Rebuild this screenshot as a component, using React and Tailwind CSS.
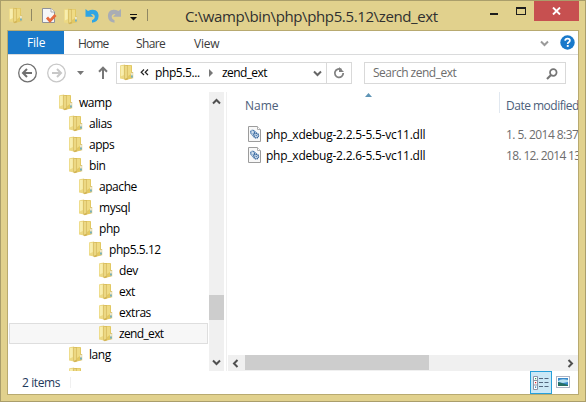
import React from "react";

const FONT = 'font-["Open_Sans","Noto_Sans",sans-serif]';

function Folder({ className = "" }) {
  return (
    <svg width="14" height="17" viewBox="0 0 14 17" className={"shrink-0 " + className}>
      <path d="M0 1.4 Q2 .6 5 .8 V15.6 L0 14.6Z" fill="#ecd984" />
      <path d="M.8 2 H3.8 V11 L.8 12.5Z" fill="#f8eeae" />
      <path d="M6 1 H11.2 Q12 1 12 2 V14.6 L6 16Z" fill="#e2c862" />
      <path d="M4.4 .8 L8 1.4 V15.2 L5.8 16.2 L4.4 15.4Z" fill="#d3b557" />
      <path d="M5 1.4 L7.4 1.9 V13.8 L5 14.8Z" fill="#ecd884" />
      <path d="M8 1.8 H11 V10 L8 12Z" fill="#efdb84" />
      <path d="M11 8 H13.2 V14.4 H11Z" fill="#dbc678" />
      <path d="M11.3 9 H12.6 V11.5 H11.3Z" fill="#f4f4ee" />
      <path d="M11.3 11.5 H12.6 V13.5 H11.3Z" fill="#46a8e0" />
    </svg>
  );
}

function DllIcon() {
  return (
    <svg width="14" height="16" viewBox="0 0 14 16" className="shrink-0">
      <path d="M0.5 0.5 H9.5 L12.5 3.5 V15.5 H0.5Z" fill="#f8f8f8" stroke="#9c9c9c" />
      <path d="M9.5 0.5 V3.5 H12.5" fill="#fff" stroke="#b0b0b0" />
      <circle cx="4.6" cy="6.2" r="2" fill="#cfdeed" stroke="#3c6ea5" strokeWidth="1.3" strokeDasharray="1 .5" />
      <circle cx="8.2" cy="9.6" r="2.3" fill="#cfdeed" stroke="#2e5f98" strokeWidth="1.4" strokeDasharray="1.1 .5" />
      <circle cx="8.2" cy="9.6" r=".7" fill="#2e5f98" />
      <path d="M3.6 8.6 L6.4 11.6 M6.4 4.9 L9.2 7.2" stroke="#6f94be" />
    </svg>
  );
}

function Chevron({ className, color = "#505050", d }) {
  return (
    <svg width="9" height="9" viewBox="0 0 9 9" className={"shrink-0 " + className}>
      <path d={d} fill="none" stroke={color} strokeWidth="2" />
    </svg>
  );
}
const UP = "M1 6.5 L4.5 3 L8 6.5";
const DOWN = "M1 2.5 L4.5 6 L8 2.5";
const LEFT = "M6.5 1 L3 4.5 L6.5 8";
const RIGHT = "M2.5 1 L6 4.5 L2.5 8";

const TREE = [
  ["wamp", "pl-[51px]"],
  ["alias", "pl-[61px]"],
  ["apps", "pl-[61px]"],
  ["bin", "pl-[61px]"],
  ["apache", "pl-[71px]"],
  ["mysql", "pl-[71px]"],
  ["php", "pl-[71px]"],
  ["php5.5.12", "pl-[81px]"],
  ["dev", "pl-[91px]"],
  ["ext", "pl-[91px]"],
  ["extras", "pl-[91px]"],
  ["zend_ext", "pl-[91px]"],
  ["lang", "pl-[61px]"],
  ["", "pl-[61px]"],
];

function TitleBar() {
  return (
    <div className="flex h-[29px] shrink-0">
      <div className="flex w-[184px] shrink-0">
        <Folder className="ml-2 mt-[6px]" />
        <div className="ml-2 mt-2 h-3 w-px bg-[#8f8763]" />
        <svg width="17" height="17" viewBox="0 0 17 17" className="ml-[9px] mt-[6px]">
          <path d="M1.5 1.5 H10 L13.5 5 V15.5 H1.5Z" fill="#f5f6f8" stroke="#8f9199" />
          <path d="M10 1.5 V5 H13.5" fill="#fff" stroke="#a5a7ad" />
          <path d="M6 10.5 L9 14 L14.5 8" fill="none" stroke="#e66a3c" strokeWidth="2.8" />
        </svg>
        <Folder className="ml-[6px] mt-[7px]" />
        <svg width="15" height="16" viewBox="0 0 15 16" className="ml-[7px] mt-[7px]">
          <path d="M0.5 1 L3 3 Q7 .8 10.5 2.2 Q13.6 4 13.6 8 Q13.4 14 7 14.8 V12.2 Q9.8 11.5 9.8 8.6 Q9.6 5.6 6 6 L8.4 8.8 H0.5Z" fill="#2fa5e4" />
        </svg>
        <svg width="15" height="16" viewBox="0 0 15 16" className="ml-[7px] mt-[7px]">
          <path d="M14 1 L11.5 3 Q7.5 .8 4 2.2 Q.9 4 .9 8 Q1.1 14 7.5 14.8 V12.2 Q4.7 11.5 4.7 8.6 Q4.9 5.6 8.5 6 L6.1 8.8 H14Z" fill="#a9adb5" />
        </svg>
        <svg width="9" height="8" viewBox="0 0 9 8" className="ml-[7px] mt-[12px]">
          <path d="M1 1 H8 V2 H1Z M1 4 H8 L4.5 7.5Z" fill="#111" />
        </svg>
        <div className="ml-[9px] mt-2 h-3 w-px bg-[#8f8763]" />
      </div>
      <div className="mt-[4px] w-[270px] whitespace-nowrap text-[15px] leading-[22px] tracking-[-0.37px] text-[#303030]">
        C:\wamp\bin\php\php5.5.12\zend_ext
      </div>
      <div className="ml-auto flex w-[101px]">
        <div className="ml-[6px] mt-3 h-[2px] w-2 bg-[#1d1d1d]" />
        <div className="ml-[18px] mt-[6px] h-2 w-[10px] border border-t-2 border-[#1d1d1d]" />
        <div className="ml-auto mr-[6px] flex h-5 w-[45px] items-center justify-center bg-[#c75050]">
          <svg width="9" height="8" viewBox="0 0 9 8">
            <path d="M1 .5 L8 7.5 M8 .5 L1 7.5" stroke="#fff" strokeWidth="1.9" />
          </svg>
        </div>
      </div>
    </div>
  );
}

function Ribbon() {
  return (
    <div className="flex h-6 shrink-0 border-b border-[#dadbdc] leading-[26px] text-[#3b3b3b]">
      <div className="h-[23px] w-14 bg-[#1979ca] pl-[19px] leading-6 tracking-[-0.2px] text-white">File</div>
      <div className="w-[58px] pl-[14px] tracking-[-0.9px]">Home</div>
      <div className="w-[72px] pl-[14px] tracking-[-0.6px]">Share</div>
      <div className="tracking-[-0.2px]">View</div>
      <Chevron className="ml-auto mt-2" color="#9a9a9a" d={DOWN} />
      <svg width="15" height="15" viewBox="0 0 15 15" className="ml-[11px] mr-[3px] mt-1">
        <circle cx="7.5" cy="7.5" r="7.2" fill="#1979ca" />
        <path d="M5.2 5.7 Q5.2 3.7 7.6 3.7 Q9.9 3.7 9.9 5.6 Q9.9 6.7 8.7 7.3 Q7.7 7.8 7.7 9" fill="none" stroke="#fff" strokeWidth="1.7" />
        <rect x="6.8" y="10" width="1.9" height="1.9" fill="#fff" />
      </svg>
    </div>
  );
}

function NavBar() {
  return (
    <div className="flex h-[37px] shrink-0 pt-[7px]">
      <svg width="100" height="22" viewBox="0 0 100 22" className="mr-2 shrink-0">
        <g fill="none">
          <circle cx="19.5" cy="11" r="8.8" stroke="#707070" strokeWidth="1.3" />
          <path d="M24 11 H15.5 M19 7 L15 11 L19 15" stroke="#707070" strokeWidth="2" />
          <circle cx="48.5" cy="11" r="8.8" stroke="#c8c8c8" strokeWidth="1.3" />
          <path d="M44 11 H52.5 M49 7 L53 11 L49 15" stroke="#c8c8c8" strokeWidth="2" />
          <path d="M95 17 V6 M91 9.7 L95 5.7 L99 9.7" stroke="#777" strokeWidth="2" />
        </g>
        <path d="M69 9 H76 L72.5 13Z" fill="#777" />
      </svg>
      <div className="flex h-[22px] w-[236px] shrink-0 border border-[#d9d9d9] leading-5">
        <Folder className="ml-[3px] mt-[1px]" />
        <svg width="9" height="7" viewBox="0 0 9 7" className="ml-[6px] mt-[6px]">
          <path d="M4 .5 L1.2 3.2 L4 6 M8 .5 L5.2 3.2 L8 6" fill="none" stroke="#222" strokeWidth="1.2" />
        </svg>
        <div className="ml-[6px] w-[48px] whitespace-nowrap tracking-[-0.4px]">php5.5...</div>
        <svg width="6" height="8" viewBox="0 0 6 8" className="ml-[5px] mt-[6px]">
          <path d="M1 0 L5 4 L1 8Z" fill="#777" />
        </svg>
        <div className="ml-[8px] w-[91px] tracking-[-0.6px]">zend_ext</div>
        <Chevron className="mt-[6px]" color="#666" d={DOWN} />
        <div className="ml-auto flex w-[25px] justify-center border-l border-[#d9d9d9] pt-[4px]">
          <svg width="12" height="12" viewBox="0 0 12 12">
            <path d="M8.5 2.8 A4.2 4.2 0 1 0 10.2 6" fill="none" stroke="#808080" strokeWidth="1.8" />
            <path d="M6 0 V5 H11Z" fill="#808080" />
          </svg>
        </div>
      </div>
      <div className="ml-3 flex h-[22px] w-[202px] shrink-0 border border-[#d9d9d9] pl-2 leading-5 tracking-[-0.5px] text-[#6d6d6d]">
        Search zend_ext
        <svg width="12" height="12" viewBox="0 0 12 12" className="ml-auto mr-[7px] mt-[5px]">
          <circle cx="7.3" cy="4.5" r="3.3" fill="none" stroke="#757575" strokeWidth="1.7" />
          <path d="M5 7 L1 11" stroke="#757575" strokeWidth="2.2" />
        </svg>
      </div>
    </div>
  );
}

function Tree() {
  return (
    <div className="flex w-[219px] shrink-0 border-r border-[#f0f0f0]">
      <div className="h-[279px] w-[201px] overflow-hidden">
        {TREE.map(([name, pad], i) => (
          <div
            key={i}
            className={
              "flex h-[21px] " +
              (name === "zend_ext"
                ? "mx-px border border-[#dedede] bg-[#f7f7f7] pl-[89px] leading-[20px] tracking-[-0.65px]"
                : "leading-[22px] tracking-[-0.45px] " + pad)
            }
          >
            <Folder className={name === "zend_ext" ? "mt-[1px]" : "mt-[2px]"} />
            <span className="ml-[6px]">{name}</span>
          </div>
        ))}
      </div>
      <div className="flex w-[15px] flex-col bg-[#f0f0f0]">
        <Chevron className="ml-[3px] mt-[5px]" d={UP} />
        <div className="mt-[189px] h-[25px] shrink-0 bg-[#cdcdcd]" />
        <Chevron className="mb-[4px] ml-[3px] mt-auto" d={DOWN} />
      </div>
    </div>
  );
}

function Files() {
  const files = [
    ["php_xdebug-2.2.5-5.5-vc11.dll", "1. 5. 2014 8:37", "tracking-[-0.55px]"],
    ["php_xdebug-2.2.6-5.5-vc11.dll", "18. 12. 2014 13", "tracking-[-0.65px]"],
  ];
  return (
    <div className="ml-px flex w-[350px] flex-col overflow-hidden">
      <div className="flex h-[21px] shrink-0 whitespace-nowrap leading-[27px] text-[#4c607a]">
        <div className="w-[137px] shrink-0 pl-[17px]">Name</div>
        <svg width="7" height="4" viewBox="0 0 7 4" className="mt-[1px]">
          <path d="M0 4 L3.5 0 L7 4Z" fill="#5e94b5" />
        </svg>
        <div className="ml-auto w-[79px] shrink-0 border-l border-[#e1e8f0] pl-[6px] tracking-[-0.5px]">Date modified</div>
      </div>
      <div className="mt-[11px]">
        {files.map(([name, date, tracking]) => (
          <div key={name} className="flex h-[21px] whitespace-nowrap pl-5 leading-[21px]">
            <div className="mt-[2px]"><DllIcon /></div>
            <div className="ml-[4px] w-[240px] shrink-0 tracking-[-0.24px]">{name}</div>
            <div className={"shrink-0 text-[#6d6d6d] " + tracking}>{date}</div>
          </div>
        ))}
      </div>
      <div className="mt-auto flex h-4 shrink-0 items-center bg-[#f0f0f0]">
        <Chevron className="ml-[3px]" d={LEFT} />
        <div className="ml-[5px] h-[15px] w-[184px] self-start bg-[#cdcdcd]" />
        <Chevron className="ml-auto mr-[3px]" d={RIGHT} />
      </div>
    </div>
  );
}

function StatusBar() {
  return (
    <div className="flex h-[23px] shrink-0 leading-6 text-[#1e395b]">
      <div className="w-[62px] pl-[14px] tracking-[-0.4px]">2 items</div>
      <div className="mt-[6px] h-[11px] w-px bg-[#f0f0f0]" />
      <div className="ml-auto flex h-[23px] w-[22px] items-center justify-center border border-[#26a0da] bg-[#cbe8f6]">
        <svg width="16" height="14" viewBox="0 0 16 14" fill="none">
          <path d="M.5 .5 H4.5 V13.5 H.5Z M.5 4.5 H4.5 M.5 9 H4.5" stroke="#8b95a8" fill="#fff" />
          <path d="M6 2.5 H10 M11.5 2.5 H15.5 M6 6.5 H10 M11.5 6.5 H15.5 M6 10.5 H10 M11.5 10.5 H15.5" stroke="#53677e" />
          <path d="M2 2 H3.2 V3.2 H2Z" fill="#36a060" />
          <path d="M2 6 H3.2 V7.2 H2Z" fill="#d22" />
          <path d="M2 10.5 H3.2 V11.7 H2Z" fill="#17b" />
        </svg>
      </div>
      <svg width="14" height="12" viewBox="0 0 14 12" className="ml-[4px] mr-2 mt-[5px]">
        <rect x=".5" y=".5" width="13" height="11" fill="#fff" stroke="#adb4c4" />
        <rect x="2" y="2" width="10" height="8" fill="#398acb" />
        <path d="M2 5 Q5 2 12 4 V6 L7 7 L2 6Z" fill="#b9e1f2" />
        <path d="M2 6 Q6 7 12 9 V10 H2Z" fill="#276f64" />
      </svg>
    </div>
  );
}

export default function App() {
  return (
    <div className={"flex h-[402px] w-[586px] flex-col overflow-hidden border border-[#aa9e6b] bg-[#e1d18d] text-[12px] text-black " + FONT}>
      <TitleBar />
      <div className="mx-[6px] flex h-[365px] w-[572px] shrink-0 flex-col border border-[#b8aa70] bg-white">
        <Ribbon />
        <NavBar />
        <div className="flex h-[279px] shrink-0">
          <Tree />
          <Files />
        </div>
        <StatusBar />
      </div>
    </div>
  );
}
